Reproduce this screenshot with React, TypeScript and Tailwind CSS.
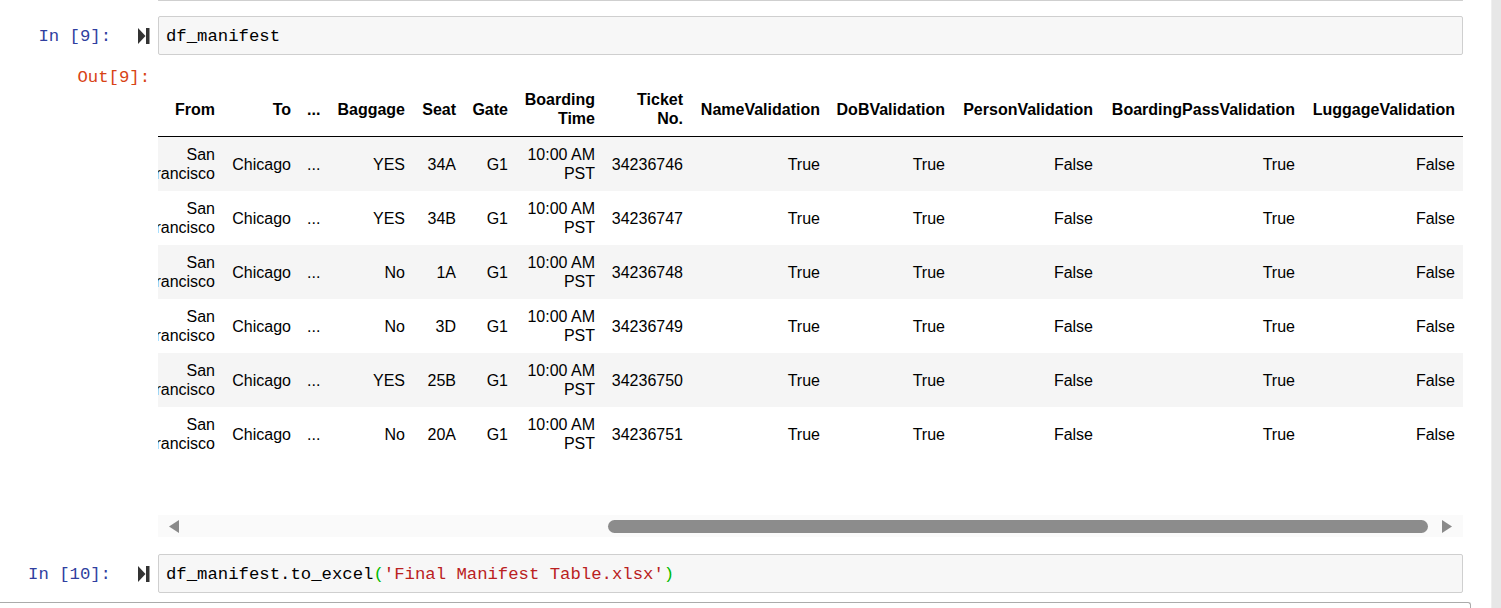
import React from 'react';

// header label + fixed column width (px, includes padding)
const columns: [string, string][] = [
  ['From', 'w-[86px]'],
  ['To', 'w-[76px]'],
  ['...', 'w-[29px]'],
  ['Baggage', 'w-[85px]'],
  ['Seat', 'w-[51px]'],
  ['Gate', 'w-[52px]'],
  ['Boarding Time', 'w-[87px]'],
  ['Ticket No.', 'w-[88px]'],
  ['NameValidation', 'w-[137px]'],
  ['DoBValidation', 'w-[125px]'],
  ['PersonValidation', 'w-[148px]'],
  ['BoardingPassValidation', 'w-[202px]'],
  ['LuggageValidation', 'w-[160px]'],
];

const rows = [
  { bag: 'YES', seat: '34A', ticket: '34236746' },
  { bag: 'YES', seat: '34B', ticket: '34236747' },
  { bag: 'No', seat: '1A', ticket: '34236748' },
  { bag: 'No', seat: '3D', ticket: '34236749' },
  { bag: 'YES', seat: '25B', ticket: '34236750' },
  { bag: 'No', seat: '20A', ticket: '34236751' },
];

function RunIcon() {
  return (
    <svg width="12" height="16" viewBox="0 0 12 16" className="ml-[27px] shrink-0">
      <path d="M0 0 L7.5 8 L0 16 Z" fill="#333" />
      <rect x="8" y="0" width="3.5" height="16" fill="#333" />
    </svg>
  );
}

function InputCell({ n, children }: { n: string; children: React.ReactNode }) {
  return (
    <div className="flex items-center">
      <div className="w-[158px] shrink-0 flex items-center">
        <span className="w-[111px] pt-[3px] text-right text-[#303F9F] font-['Liberation_Mono',monospace] text-[17.3px] leading-[20px] whitespace-pre">
          {`In [${n}]:`}
        </span>
        <RunIcon />
      </div>
      <div className="w-[1305px] h-[39px] bg-[#f7f7f7] border border-[#cfcfcf] rounded-[2px] pl-[7px] flex items-center">
        <span className="pt-[3px] font-['Liberation_Mono',monospace] text-[17.3px] leading-[20px] text-black whitespace-pre">
          {children}
        </span>
      </div>
    </div>
  );
}

export default function App() {
  const cell = 'px-2 py-2 text-right align-middle';
  return (
    <div className="w-full h-[608px] overflow-hidden bg-white flex">
      <div className="w-[1491px] shrink-0 flex flex-col">
        {/* previous cell remnant */}
        <div className="ml-[158px] w-[1305px] h-[2px] border-x border-b border-[#cfcfcf] rounded-b-[2px]" />

        <div className="mt-[15px]">
          <InputCell n="9">df_manifest</InputCell>
        </div>

        {/* output */}
        <div className="mt-[10px] flex">
          <div className="w-[158px] shrink-0">
            <div className="w-[150px] pt-[3px] text-right text-[#D84315] font-['Liberation_Mono',monospace] text-[17.3px] leading-[20px]">
              Out[9]:
            </div>
          </div>
          <div className="w-[1305px] flex flex-col">
            <div className="pt-[17px] flex justify-end overflow-hidden">
              <table className="w-[1326px] shrink-0 table-fixed border-separate border-spacing-0 text-[16px] leading-[19px] text-black font-['Liberation_Sans',Arial,sans-serif]">
                <thead>
                  <tr className="h-[54px]">
                    {columns.map(([h, w]) => (
                      <th key={h} className={`${cell} ${w} font-bold border-b border-black`}>
                        {h}
                      </th>
                    ))}
                  </tr>
                </thead>
                <tbody>
                  {rows.map((r, i) => (
                    <tr key={r.ticket} className={`h-[54px] ${i % 2 === 0 ? 'bg-[#f5f5f5]' : 'bg-white'}`}>
                      <td className={cell}>San Francisco</td>
                      <td className={cell}>Chicago</td>
                      <td className={cell}>...</td>
                      <td className={cell}>{r.bag}</td>
                      <td className={cell}>{r.seat}</td>
                      <td className={cell}>G1</td>
                      <td className={cell}>10:00 AM PST</td>
                      <td className={cell}>{r.ticket}</td>
                      <td className={cell}>True</td>
                      <td className={cell}>True</td>
                      <td className={cell}>False</td>
                      <td className={cell}>True</td>
                      <td className={cell}>False</td>
                    </tr>
                  ))}
                </tbody>
              </table>
            </div>

            {/* horizontal scrollbar */}
            <div className="mt-[54px] h-[22px] bg-[#fafafa] flex items-center">
              <svg width="11" height="13" viewBox="0 0 11 13" className="ml-[11px] shrink-0">
                <path d="M0 6.5 L10 0 L10 13 Z" fill="#8a8a8a" />
              </svg>
              <div className="ml-[428px] w-[820px] h-[13px] rounded-full bg-[#8c8c8c] shrink-0" />
              <svg width="11" height="13" viewBox="0 0 11 13" className="ml-[13px] shrink-0">
                <path d="M1 0 L11 6.5 L1 13 Z" fill="#8a8a8a" />
              </svg>
            </div>
          </div>
        </div>

        <div className="mt-[17px]">
          <InputCell n="10">
            <span>df_manifest.to_excel</span>
            <span className="text-[#00bb00]">(</span>
            <span className="text-[#BA2121]">'Final Manifest Table.xlsx'</span>
            <span className="text-[#00bb00]">)</span>
          </InputCell>
        </div>

        {/* next cell */}
        <div className="mt-[9px] w-[1471px] h-[20px] border-t border-r border-[#ababab] rounded-tr-[3px]" />
      </div>
      <div className="w-[10px] shrink-0 h-full bg-[#e7e7e7] border-l border-[#efefef]" />
    </div>
  );
}
